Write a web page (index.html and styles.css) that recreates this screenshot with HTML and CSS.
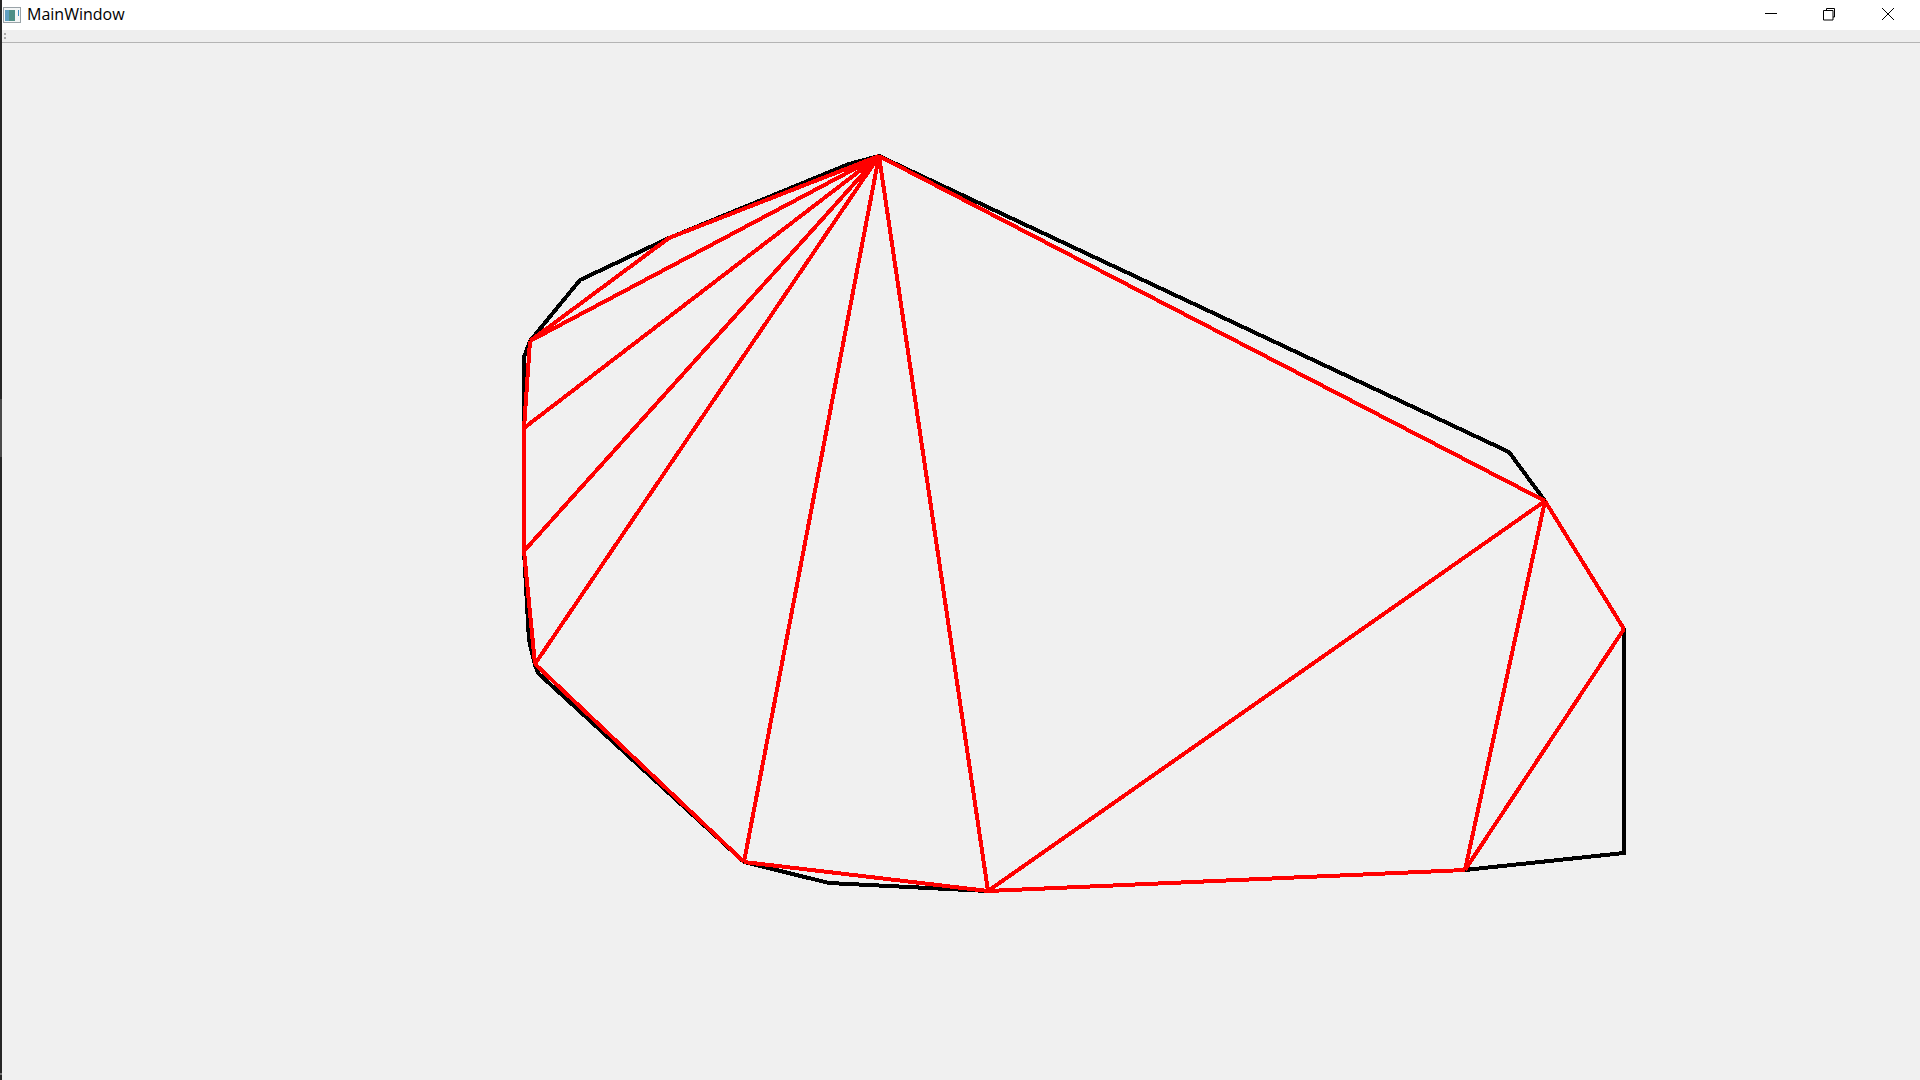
FILE: index.html
```html
<!DOCTYPE html>
<html lang="en">

<head>
    <meta charset="UTF-8">
    <title>MainWindow</title>
    <link rel="stylesheet" href="styles.css">
</head>

<body>
    <div class="desktop-edge"></div>
    <div class="window">
        <div class="titlebar">
            <svg class="app-icon" width="18" height="16" viewBox="0 0 18 16">
                <rect x="0.5" y="0.5" width="17" height="15" fill="#f4f6f6" stroke="#9aa3a8" />
                <rect x="2" y="3" width="10" height="11" fill="#4f8f86" />
                <rect x="2" y="3" width="4" height="11" fill="#5f9fc0" />
                <rect x="15" y="3" width="1" height="6" fill="#3f8fc0" />
            </svg>
            <span class="title">MainWindow</span>
            <div class="controls">
                <svg class="control" width="58" height="30" viewBox="0 0 58 30">
                    <path d="M22 13.500H34" stroke="#000" fill="none" />
                </svg>
                <svg class="control" width="58" height="30" viewBox="0 0 58 30">
                    <path d="M22.500 10.500h9.500v9.500h-9.500z M25.500 10.500v-2h8v8.500h-1.500" stroke="#000" fill="none" />
                </svg>
                <svg class="control" width="58" height="30" viewBox="0 0 58 30">
                    <path d="M23 8L35 20M35 8L23 20" stroke="#000" fill="none" />
                </svg>
            </div>
        </div>
        <div class="toolbar">
            <span class="grip"></span>
        </div>
        <svg class="canvas" width="1918" height="1037" viewBox="2 43 1918 1037">
            <polygon class="hull"
                points="879,156 849,164 669,238 580,280 530,341 524,357 524,427 524,551 529,640 535,665 538,673 744,862 829,883 988,891 1465,870 1624,853 1624,629 1545,501 1509,452" />
            <g class="edges">
                <line x1="879" y1="156" x2="669" y2="238" />
                <line x1="669" y1="238" x2="530" y2="341" />
                <line x1="879" y1="156" x2="530" y2="341" />
                <line x1="530" y1="341" x2="524" y2="428" />
                <line x1="879" y1="156" x2="524" y2="428" />
                <line x1="524" y1="428" x2="524" y2="551" />
                <line x1="879" y1="156" x2="524" y2="551" />
                <line x1="524" y1="551" x2="535" y2="664" />
                <line x1="879" y1="156" x2="535" y2="664" />
                <line x1="535" y1="664" x2="744" y2="862" />
                <line x1="879" y1="156" x2="744" y2="862" />
                <line x1="744" y1="862" x2="988" y2="891" />
                <line x1="879" y1="156" x2="988" y2="891" />
                <line x1="988" y1="891" x2="1545" y2="501" />
                <line x1="879" y1="156" x2="1545" y2="501" />
                <line x1="1545" y1="501" x2="1465" y2="870" />
                <line x1="1545" y1="501" x2="1624" y2="629" />
                <line x1="1624" y1="629" x2="1465" y2="870" />
                <line x1="1465" y1="870" x2="988" y2="891" />
            </g>
        </svg>
    </div>
</body>

</html>
```

FILE: styles.css
```css
html,
body {
    margin: 0;
    height: 100%;
    overflow: hidden;
}

body {
    display: flex;
    background-color: #f0f0f0;
    font-family: "Open Sans", "Noto Sans", sans-serif;
}

.desktop-edge {
    width: 2px;
    background: linear-gradient(#262626 399px, #4a4a4a 399px, #4a4a4a 457px, #262626 457px, #262626 1073px, #777 1073px, #777 1075px, #262626 1075px);
}

.window {
    flex: 1;
    display: flex;
    flex-direction: column;
}

.titlebar {
    display: flex;
    align-items: center;
    height: 30px;
    background-color: #fff;
    padding: 0 3px 0 1px;
}

.app-icon {
    margin-right: 6px;
}

.title {
    font-size: 16px;
    line-height: 22px;
    margin-bottom: 2px;
    color: #000;
}

.controls {
    display: flex;
    margin-left: auto;
}

.control {
    display: block;
}

.toolbar {
    height: 12px;
    background-color: #eeeeee;
    border-bottom: 1px solid #b4b4b4;
}

.grip {
    display: block;
    width: 2px;
    height: 6px;
    margin: 3px 0 0 2px;
    background: repeating-linear-gradient(#a8a8a8 0 2px, transparent 2px 4px);
}

.canvas {
    display: block;
    background-color: #f0f0f0;
}

.hull {
    fill: none;
    stroke: #000;
    stroke-width: 4;
    shape-rendering: crispEdges;
}

.edges line {
    stroke: #ff0000;
    stroke-width: 4;
    shape-rendering: crispEdges;
}
```
